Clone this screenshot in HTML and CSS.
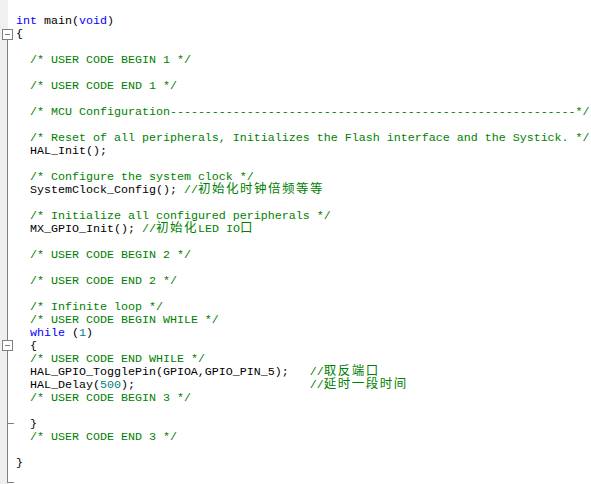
FILE: index.html
```html
<!DOCTYPE html>
<html>
<head>
<meta charset="utf-8">
<link rel="stylesheet" href="styles.css">
</head>
<body>
<div class="editor">
  <div class="gutter">
    <svg class="fold" width="15" height="484" viewBox="0 0 15 484">
      <line x1="7.5" y1="39" x2="7.5" y2="340" stroke="#808080" stroke-width="1"/>
      <rect x="2.5" y="29.5" width="10" height="10" fill="#fff" stroke="#808080"/>
      <line x1="5" y1="34.5" x2="10" y2="34.5" stroke="#808080"/>
      <rect x="2.5" y="340.5" width="10" height="10" fill="#fff" stroke="#808080"/>
      <line x1="5" y1="345.5" x2="10" y2="345.5" stroke="#808080"/>
      <line x1="7.5" y1="351" x2="7.5" y2="482.5" stroke="#808080"/>
      <line x1="7" y1="423.5" x2="14" y2="423.5" stroke="#808080"/>
      <line x1="7" y1="482.5" x2="14" y2="482.5" stroke="#808080"/>
    </svg>
  </div>
<pre class="code"><span class="kw">int</span> main(<span class="kw">void</span>)
{

  <span class="cm">/* USER CODE BEGIN 1 */</span>

  <span class="cm">/* USER CODE END 1 */</span>

  <span class="cm">/* MCU Configuration----------------------------------------------------------*/</span>

  <span class="cm">/* Reset of all peripherals, Initializes the Flash interface and the Systick. */</span>
  HAL_Init();

  <span class="cm">/* Configure the system clock */</span>
  SystemClock_Config(); <span class="cm">//<span class="cjk">初始化时钟倍频等等</span></span>

  <span class="cm">/* Initialize all configured peripherals */</span>
  MX_GPIO_Init(); <span class="cm">//<span class="cjk">初始化</span>LED IO<span class="cjk">口</span></span>

  <span class="cm">/* USER CODE BEGIN 2 */</span>

  <span class="cm">/* USER CODE END 2 */</span>

  <span class="cm">/* Infinite loop */</span>
  <span class="cm">/* USER CODE BEGIN WHILE */</span>
  <span class="kw">while</span> (<span class="num">1</span>)
  {
  <span class="cm">/* USER CODE END WHILE */</span>
  HAL_GPIO_TogglePin(GPIOA,GPIO_PIN_5);   <span class="cm">//<span class="cjk">取反端口</span></span>
  HAL_Delay(<span class="num">500</span>);                         <span class="cm">//<span class="cjk">延时一段时间</span></span>
  <span class="cm">/* USER CODE BEGIN 3 */</span>

  }
  <span class="cm">/* USER CODE END 3 */</span>

}

<span class="cm">/</span></pre>
</div>
</body>
</html>
```

FILE: styles.css
```css
html, body {
  margin: 0;
  padding: 0;
  background: #ffffff;
}
body {
  width: 591px;
  height: 484px;
  overflow: hidden;
}
.editor {
  display: flex;
  height: 484px;
  background: #ffffff;
}
.gutter {
  width: 15px;
  flex: none;
  background: linear-gradient(to right, #f0f0f0 0, #f0f0f0 8px, #ffffff 8px);
}
.fold {
  display: block;
}
.code {
  margin: 0;
  padding: 15px 0 0 1px;
  font-family: "Liberation Mono", monospace;
  font-size: 11.66px;
  line-height: 13px;
  color: #000000;
  white-space: pre;
}
.kw { color: #0000ff; }
.cm { color: #008000; }
.num { color: #008080; }
.cjk {
  font-family: "Noto Sans CJK SC", sans-serif;
  font-size: 12.5px;
  letter-spacing: 1.5px;
  line-height: 0;
}
```
